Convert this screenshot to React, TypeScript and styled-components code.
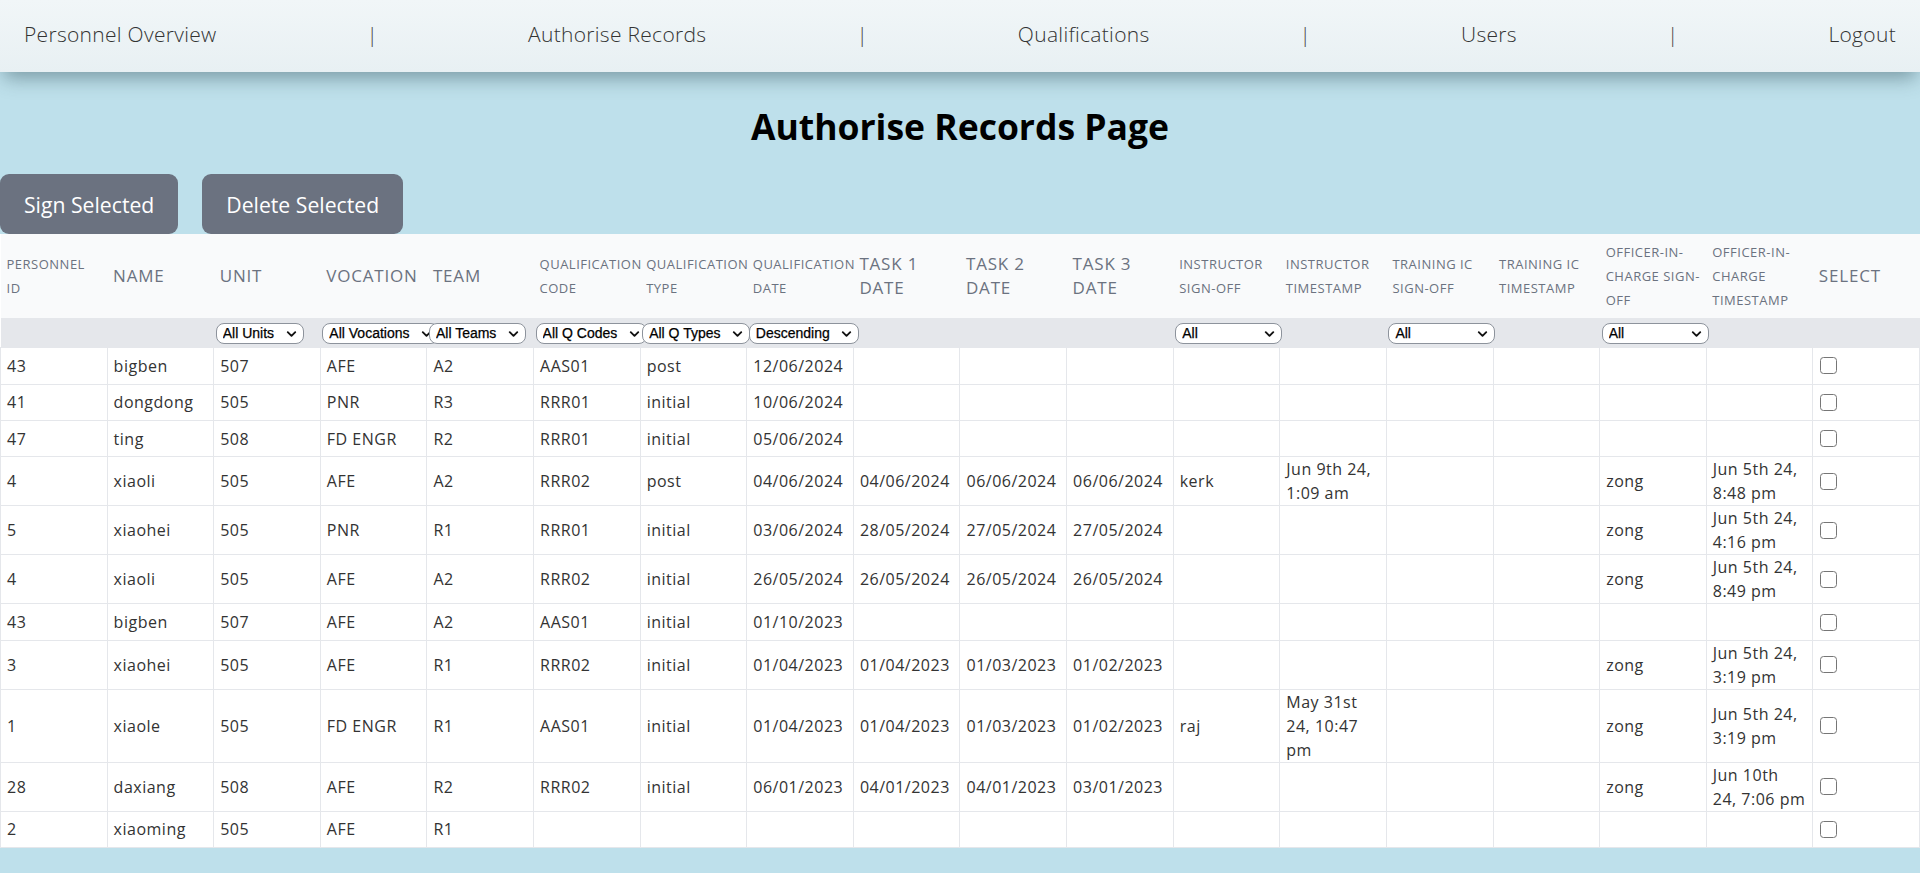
import React from "react";
import styled, { createGlobalStyle } from "styled-components";
import { ChevronDown } from "lucide-react";

const GlobalStyle = createGlobalStyle`
  html, body {
    margin: 0;
    padding: 0;
    background: #bee0eb;
    font-family: "Open Sans", "Noto Sans", sans-serif;
    color: #333;
  }
  * { box-sizing: border-box; }
`;

const Nav = styled.nav`
  position: relative;
  z-index: 2;
  height: 72px;
  padding: 0 24px 5px;
  display: flex;
  align-items: center;
  justify-content: space-between;
  background: linear-gradient(to bottom, #f1f6f8, #e8f0f3);
  box-shadow: 0 10px 18px -4px rgba(40, 70, 80, 0.45);
`;

const NavLink = styled.a`
  font-size: 21px;
  font-weight: 300;
  color: #333;
  text-decoration: none;
  letter-spacing: 0.3px;
  cursor: pointer;
`;

const NavDivider = styled.span`
  font-size: 21px;
  font-weight: 300;
  color: #444;
`;

const Title = styled.h1`
  margin: 34px 0 28px;
  text-align: center;
  font-size: 35.5px;
  line-height: 40px;
  font-weight: 700;
  color: #000;
`;

const Actions = styled.div`
  display: flex;
  gap: 24px;
`;

const ActionButton = styled.button`
  height: 60px;
  padding: 0 24px;
  border: none;
  border-radius: 9px;
  background: #6b7280;
  color: #fff;
  font-family: "Open Sans", "Noto Sans", sans-serif;
  font-size: 21.2px;
  cursor: pointer;
`;

const Table = styled.table`
  width: 100%;
  table-layout: fixed;
  border-collapse: collapse;
  background: #fff;
`;

const HeadCell = styled.th<{ $size: "sm" | "lg" }>`
  background: #f9fafb;
  padding: 6px 1px 6px 6px;
  text-align: left;
  vertical-align: middle;
  font-weight: 400;
  text-transform: uppercase;
  color: #6b7280;
  line-height: 24px;
  font-size: ${(p) => (p.$size === "sm" ? "13px" : "17px")};
  letter-spacing: ${(p) => (p.$size === "sm" ? "0.5px" : "0.8px")};
`;

const HeadLine = styled.span`
  display: block;
  white-space: nowrap;
`;

const FilterCell = styled.td`
  background: #e5e7eb;
  padding: 3px 2px;
  height: 28px;
  vertical-align: middle;
  white-space: nowrap;
`;

const SelectWrap = styled.span`
  position: relative;
  display: inline-block;
  vertical-align: middle;
`;

const FilterSelect = styled.select<{ $wide?: boolean }>`
  appearance: none;
  -webkit-appearance: none;
  display: block;
  height: 21px;
  width: ${(p) => (p.$wide ? "107px" : "auto")};
  padding: 0 28px 0 6px;
  border: 1px solid #8d939c;
  border-radius: 8px;
  background: #fff;
  color: #000;
  font-family: "Liberation Sans", Arial, sans-serif;
  font-size: 14px;
  line-height: 19px;
  -webkit-text-stroke: 0.25px #000;
`;

const Chevron = styled(ChevronDown)`
  position: absolute;
  right: 5px;
  top: 50%;
  transform: translateY(-50%);
  pointer-events: none;
  color: #111;
`;

const Cell = styled.td`
  height: 36.4px;
  padding: 0 6px;
  border: 1px solid #e5e7eb;
  vertical-align: middle;
  font-size: 16px;
  line-height: 24px;
  letter-spacing: 0.5px;
  color: #333;
`;

const Check = styled.input`
  appearance: none;
  -webkit-appearance: none;
  display: block;
  width: 17px;
  height: 17px;
  margin: 0 0 0 1px;
  border: 1.5px solid #767676;
  border-radius: 3.5px;
  background: #fff;
  cursor: pointer;
`;

type Col = { lines: string[]; size: "sm" | "lg" };

const columns: Col[] = [
  { lines: ["Personnel", "ID"], size: "sm" },
  { lines: ["Name"], size: "lg" },
  { lines: ["Unit"], size: "lg" },
  { lines: ["Vocation"], size: "lg" },
  { lines: ["Team"], size: "lg" },
  { lines: ["Qualification", "Code"], size: "sm" },
  { lines: ["Qualification", "Type"], size: "sm" },
  { lines: ["Qualification", "Date"], size: "sm" },
  { lines: ["Task 1", "Date"], size: "lg" },
  { lines: ["Task 2", "Date"], size: "lg" },
  { lines: ["Task 3", "Date"], size: "lg" },
  { lines: ["Instructor", "Sign-off"], size: "sm" },
  { lines: ["Instructor", "Timestamp"], size: "sm" },
  { lines: ["Training IC", "Sign-off"], size: "sm" },
  { lines: ["Training IC", "Timestamp"], size: "sm" },
  { lines: ["Officer-in-", "Charge Sign-", "off"], size: "sm" },
  { lines: ["Officer-in-", "Charge", "Timestamp"], size: "sm" },
  { lines: ["Select"], size: "lg" },
];

type Filter = { options: string[]; wide?: boolean } | null;

const signOpts = { options: ["All", "Signed", "Unsigned"], wide: true };

const filters: Filter[] = [
  null,
  null,
  { options: ["All Units", "505", "507", "508"] },
  { options: ["All Vocations", "AFE", "PNR", "FD ENGR"] },
  { options: ["All Teams", "A2", "R1", "R2", "R3"] },
  { options: ["All Q Codes", "AAS01", "RRR01", "RRR02"] },
  { options: ["All Q Types", "initial", "post"] },
  { options: ["Descending", "Ascending"] },
  null,
  null,
  null,
  signOpts,
  null,
  signOpts,
  null,
  signOpts,
  null,
  null,
];

type Row = string[];

const rows: Row[] = [
  ["43", "bigben", "507", "AFE", "A2", "AAS01", "post", "12/06/2024", "", "", "", "", "", "", "", "", ""],
  ["41", "dongdong", "505", "PNR", "R3", "RRR01", "initial", "10/06/2024", "", "", "", "", "", "", "", "", ""],
  ["47", "ting", "508", "FD ENGR", "R2", "RRR01", "initial", "05/06/2024", "", "", "", "", "", "", "", "", ""],
  ["4", "xiaoli", "505", "AFE", "A2", "RRR02", "post", "04/06/2024", "04/06/2024", "06/06/2024", "06/06/2024", "kerk", "Jun 9th 24, 1:09 am", "", "", "zong", "Jun 5th 24, 8:48 pm"],
  ["5", "xiaohei", "505", "PNR", "R1", "RRR01", "initial", "03/06/2024", "28/05/2024", "27/05/2024", "27/05/2024", "", "", "", "", "zong", "Jun 5th 24, 4:16 pm"],
  ["4", "xiaoli", "505", "AFE", "A2", "RRR02", "initial", "26/05/2024", "26/05/2024", "26/05/2024", "26/05/2024", "", "", "", "", "zong", "Jun 5th 24, 8:49 pm"],
  ["43", "bigben", "507", "AFE", "A2", "AAS01", "initial", "01/10/2023", "", "", "", "", "", "", "", "", ""],
  ["3", "xiaohei", "505", "AFE", "R1", "RRR02", "initial", "01/04/2023", "01/04/2023", "01/03/2023", "01/02/2023", "", "", "", "", "zong", "Jun 5th 24, 3:19 pm"],
  ["1", "xiaole", "505", "FD ENGR", "R1", "AAS01", "initial", "01/04/2023", "01/04/2023", "01/03/2023", "01/02/2023", "raj", "May 31st 24, 10:47 pm", "", "", "zong", "Jun 5th 24, 3:19 pm"],
  ["28", "daxiang", "508", "AFE", "R2", "RRR02", "initial", "06/01/2023", "04/01/2023", "04/01/2023", "03/01/2023", "", "", "", "", "zong", "Jun 10th 24, 7:06 pm"],
  ["2", "xiaoming", "505", "AFE", "R1", "", "", "", "", "", "", "", "", "", "", "", ""],
];

const navItems = ["Personnel Overview", "Authorise Records", "Qualifications", "Users", "Logout"];

export default function App() {
  return (
    <>
      <GlobalStyle />
      <Nav>
        {navItems.map((item, i) => (
          <React.Fragment key={item}>
            {i > 0 && <NavDivider>|</NavDivider>}
            <NavLink>{item}</NavLink>
          </React.Fragment>
        ))}
      </Nav>
      <Title>Authorise Records Page</Title>
      <Actions>
        <ActionButton>Sign Selected</ActionButton>
        <ActionButton>Delete Selected</ActionButton>
      </Actions>
      <Table>
        <thead>
          <tr>
            {columns.map((c, i) => (
              <HeadCell key={i} $size={c.size}>
                {c.lines.map((l, li) => (
                  <HeadLine key={li}>{l}</HeadLine>
                ))}
              </HeadCell>
            ))}
          </tr>
          <tr>
            {filters.map((f, i) => (
              <FilterCell key={i}>
                {f && (
                  <SelectWrap>
                    <FilterSelect $wide={f.wide} defaultValue={f.options[0]}>
                      {f.options.map((o) => (
                        <option key={o} value={o}>
                          {o}
                        </option>
                      ))}
                    </FilterSelect>
                    <Chevron size={15} strokeWidth={3} />
                  </SelectWrap>
                )}
              </FilterCell>
            ))}
          </tr>
        </thead>
        <tbody>
          {rows.map((r, ri) => (
            <tr key={ri}>
              {r.map((v, ci) => (
                <Cell key={ci}>{v}</Cell>
              ))}
              <Cell>
                <Check type="checkbox" />
              </Cell>
            </tr>
          ))}
        </tbody>
      </Table>
    </>
  );
}
